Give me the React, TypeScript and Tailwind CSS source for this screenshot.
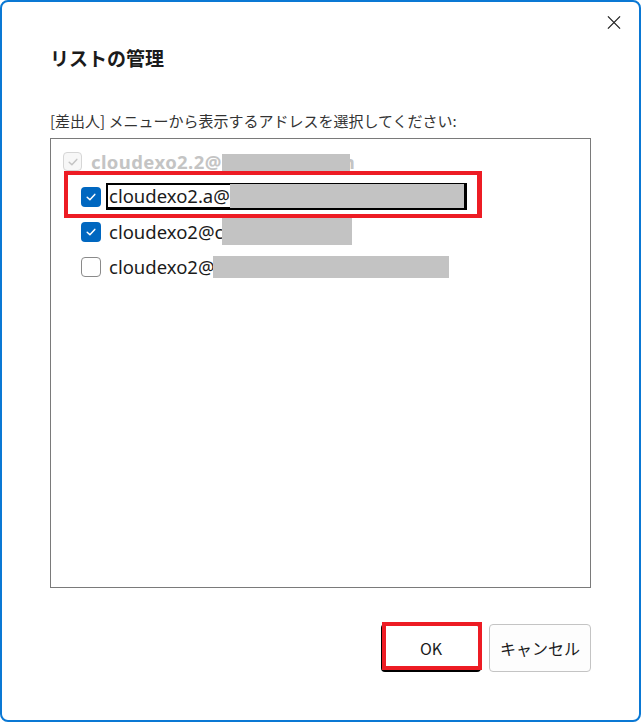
import React from "react";

const jp = "font-['Noto_Sans_CJK_JP','Noto_Sans',sans-serif]";
const latin = "font-['Noto_Sans','Noto_Sans_CJK_JP',sans-serif]";

const CheckMark = ({ color }: { color: string }) => (
  <svg width="12" height="12" viewBox="0 0 12 12" fill="none">
    <path d="M2.2 6.3 L4.9 8.8 L9.8 3.4" stroke={color} strokeWidth="1.5" strokeLinecap="round" strokeLinejoin="round" />
  </svg>
);

const Checkbox = ({ state }: { state: "on" | "off" | "disabled" }) => {
  if (state === "on") {
    return (
      <span className="w-[20px] h-[20px] rounded-[4px] bg-[#0067c0] flex items-center justify-center shrink-0">
        <CheckMark color="#ffffff" />
      </span>
    );
  }
  if (state === "disabled") {
    return (
      <span className="w-[19px] h-[19px] rounded-[4px] border border-[#d6d6d6] bg-[#f7f7f7] flex items-center justify-center shrink-0">
        <CheckMark color="#c4c4c4" />
      </span>
    );
  }
  return <span className="w-[20px] h-[20px] rounded-[4px] border-[1.5px] border-[#8a8a8a] bg-white shrink-0" />;
};

export default function App() {
  return (
    <div className="w-[643px] h-[722px] bg-white">
      <div className="relative w-[641px] h-[722px] border-2 border-[#0a78d4] rounded-[8px] bg-white flex flex-col pl-[48px] pt-[42px]">
        {/* close */}
        <button className="absolute left-[605px] top-[13px] w-[14px] h-[14px] flex items-center justify-center">
          <svg width="15" height="15" viewBox="0 0 15 15">
            <path d="M1 1 L14 14 M14 1 L1 14" stroke="#1b1b1b" strokeWidth="1.3" />
          </svg>
        </button>

        <h1 className={`${jp} text-[19px] leading-[28px] font-bold text-[#1b1b1b]`}>リストの管理</h1>

        <p className={`${jp} mt-[39px] text-[15px] leading-[20px] text-[#333333]`}>
          [差出人] メニューから表示するアドレスを選択してください:
        </p>

        <div className={`${latin} mt-[7px] w-[541px] h-[450px] border border-[#7a7a7a] pt-[5px] text-[18.5px]`}>
          {/* parent (disabled) */}
          <div className="h-[35px] flex items-center pl-[12px]">
            <Checkbox state="disabled" />
            <span className="ml-[9px] font-bold text-[#c4c4c4] flex items-center tracking-[0.4px]">
              cloudexo2.2@
              <span className="relative z-10 inline-block w-[128px] h-[17px] bg-[#c3c3c3] mt-[2px]" />
              <span className="-ml-[7px]">n</span>
            </span>
          </div>
          {/* child 1 - focused */}
          <div className="h-[35px] flex items-center pl-[30px]">
            <Checkbox state="on" />
            <span className="ml-[5px] flex items-center h-[27px] border-2 border-r-[3px] border-b-[3px] border-black pl-[1px] text-[#1b1b1b]">
              cloudexo2.a@
              <span className="inline-block w-[234px] h-[24px] bg-[#c3c3c3]" />
            </span>
          </div>
          {/* child 2 */}
          <div className="h-[35px] flex items-center pl-[30px]">
            <Checkbox state="on" />
            <span className="ml-[5px] flex items-center border-2 border-transparent pl-[1px] text-[#1b1b1b]">
              cloudexo2@c
              <span className="relative z-10 inline-block w-[130px] h-[27px] bg-[#c3c3c3] -ml-[1px]" />
            </span>
          </div>
          {/* child 3 */}
          <div className="h-[35px] flex items-center pl-[30px]">
            <Checkbox state="off" />
            <span className="ml-[5px] flex items-center border-2 border-transparent pl-[1px] text-[#1b1b1b]">
              cloudexo2@
              <span className="inline-block w-[236px] h-[22px] bg-[#c3c3c3] -ml-[2px]" />
            </span>
          </div>
        </div>

        <div className={`${jp} mt-[36px] w-[541px] flex justify-end gap-[8px]`}>
          <button className="w-[100px] h-[48px] rounded-[4px] border-2 border-black bg-white text-[16px] text-[#1b1b1b]">
            OK
          </button>
          <button className="w-[102px] h-[48px] rounded-[4px] border border-[#c4c4c4] bg-[#fdfdfd] text-[16px] text-[#1b1b1b]">
            キャンセル
          </button>
        </div>

        {/* red annotation boxes */}
        <div className="absolute left-[62px] top-[169px] w-[418px] h-[47px] border-4 border-r-[5px] border-[#ed1c24] pointer-events-none" />
        <div className="absolute left-[380px] top-[620px] w-[100px] h-[48px] border-4 border-[#ed1c24] pointer-events-none" />
      </div>
    </div>
  );
}
